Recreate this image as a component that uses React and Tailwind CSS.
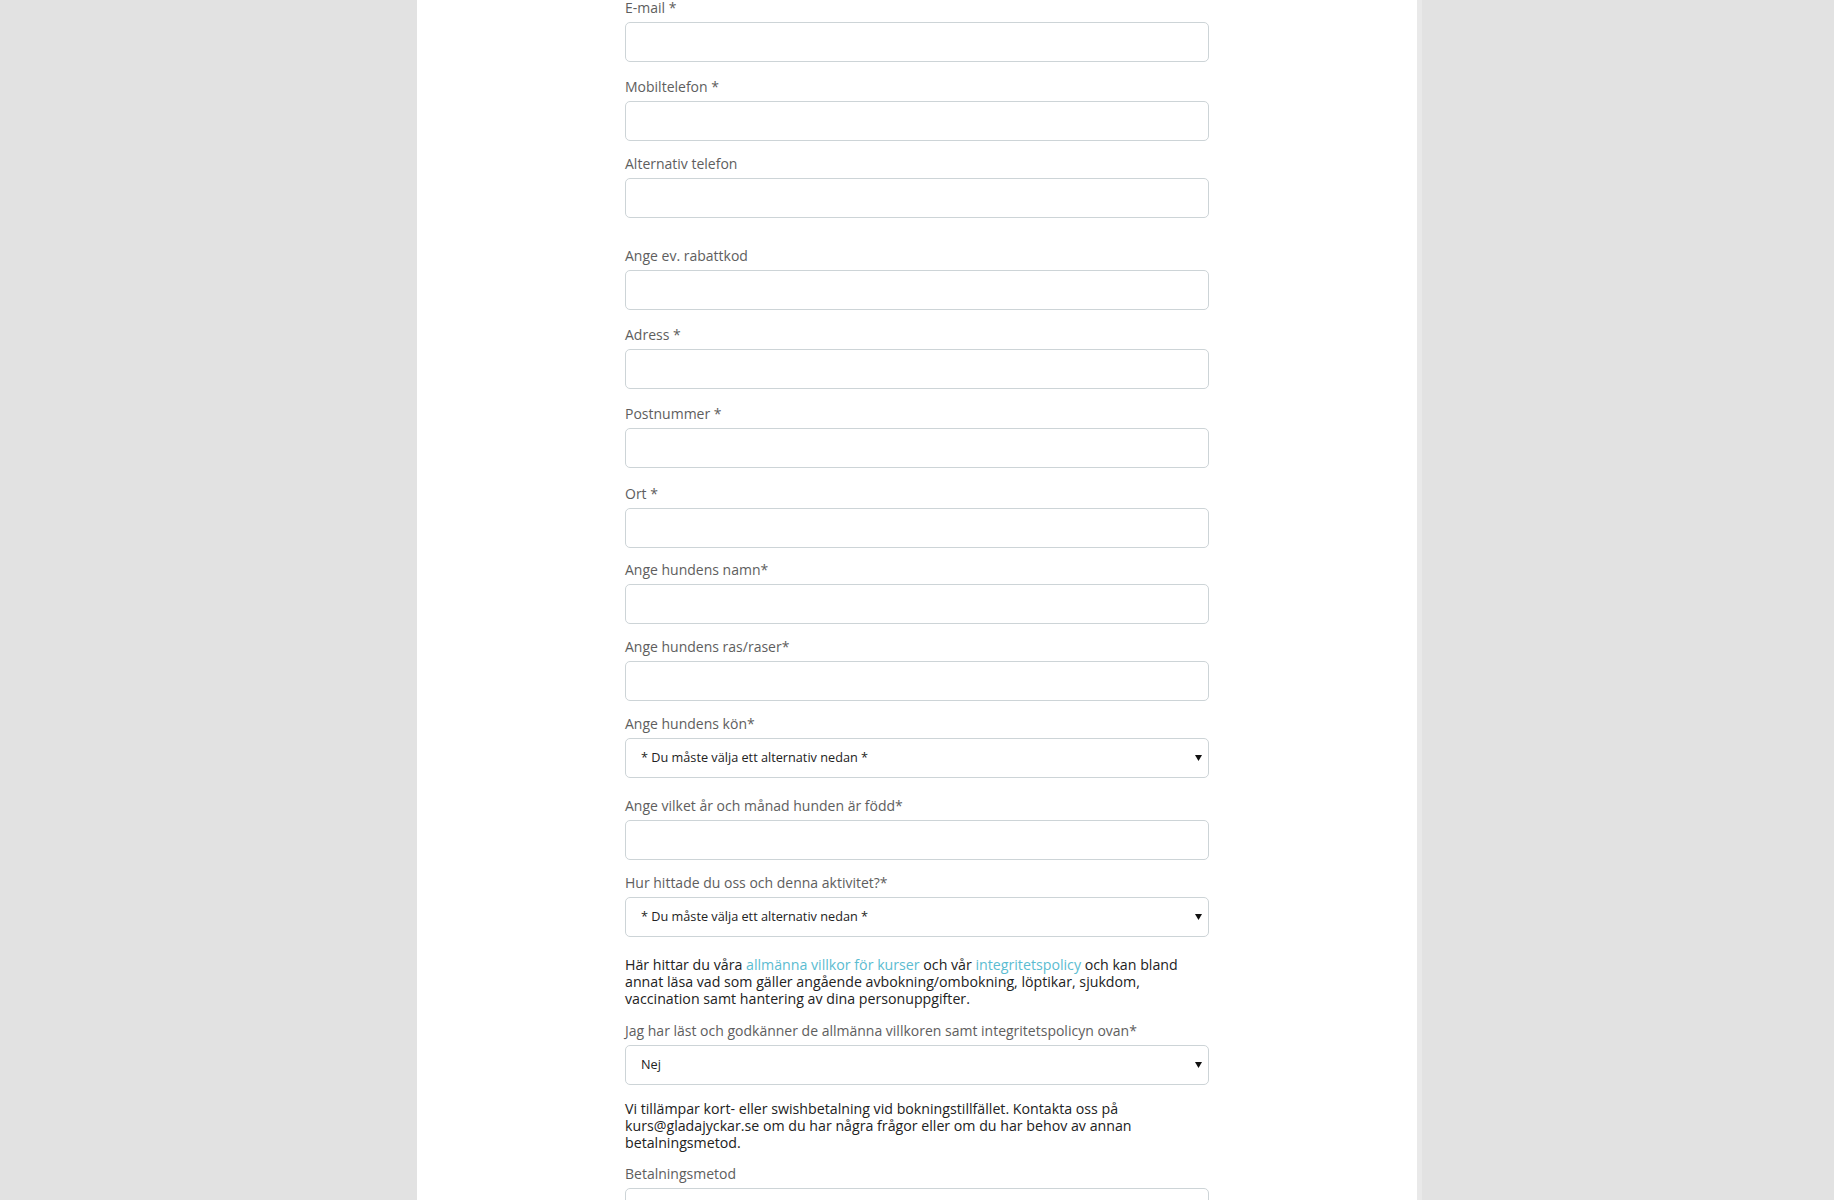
import React from "react";

const font = { fontFamily: "'Open Sans', Lato, sans-serif" };

function Label({ children, className = "" }) {
  return (
    <div className={"text-[14px] leading-[20px] text-[#5e5e5e] pt-[1px] mb-[4px] " + className}>
      {children}
    </div>
  );
}

function TextInput() {
  return <div className="h-[40px] w-full border border-[#cdd4d7] rounded-[5px] bg-white" />;
}

function Select({ value }) {
  return (
    <div className="h-[40px] w-full border border-[#cdd4d7] rounded-[5px] bg-white flex items-center justify-between pl-[15px] pr-[6px]">
      <span className="text-[12.7px] text-[#222]">{value}</span>
      <svg width="7" height="6" viewBox="0 0 7 6" className="block">
        <polygon points="0,0 7,0 3.5,6" fill="#111" />
      </svg>
    </div>
  );
}

function Field({ label, mt, select }) {
  return (
    <div className={mt}>
      <Label>{label}</Label>
      {select ? <Select value={select} /> : <TextInput />}
    </div>
  );
}

export default function App() {
  const placeholder = "* Du måste välja ett alternativ nedan *";
  return (
    <div className="min-h-screen bg-[#e2e2e2] overflow-hidden" style={font}>
      <div className="mx-auto w-[1000px] min-h-[1200px] bg-white shadow-[5px_0_0_#e9e9e9]">
        <div className="mx-auto w-[584px] pb-10">
          <Field label="E-mail *" mt="mt-[-3px]" />
          <Field label="Mobiltelefon *" mt="mt-[14px]" />
          <Field label="Alternativ telefon" mt="mt-[12px]" />
          <Field label="Ange ev. rabattkod" mt="mt-[27px]" />
          <Field label="Adress *" mt="mt-[14px]" />
          <Field label="Postnummer *" mt="mt-[14px]" />
          <Field label="Ort *" mt="mt-[15px]" />
          <Field label="Ange hundens namn*" mt="mt-[11px]" />
          <Field label="Ange hundens ras/raser*" mt="mt-[12px]" />
          <Field label="Ange hundens kön*" mt="mt-[12px]" select={placeholder} />
          <Field label="Ange vilket år och månad hunden är född*" mt="mt-[17px]" />
          <Field label="Hur hittade du oss och denna aktivitet?*" mt="mt-[12px]" select={placeholder} />

          <p className="mt-[19px] text-[14.2px] leading-[17px] text-[#222]">
            Här hittar du våra{" "}
            <a className="text-[#5bbcd1]">allmänna villkor för kurser</a> och vår{" "}
            <a className="text-[#5bbcd1]">integritetspolicy</a> och kan bland
            <br />
            annat läsa vad som gäller angående avbokning/ombokning, löptikar, sjukdom,
            <br />
            vaccination samt hantering av dina personuppgifter.
          </p>

          <Field
            label="Jag har läst och godkänner de allmänna villkoren samt integritetspolicyn ovan*"
            mt="mt-[13px]"
            select="Nej"
          />

          <p className="mt-[15px] text-[14.2px] leading-[17px] text-[#222]">
            Vi tillämpar kort- eller swishbetalning vid bokningstillfället. Kontakta oss på
            <br />
            kurs@gladajyckar.se om du har några frågor eller om du har behov av annan
            <br />
            betalningsmetod.
          </p>

          <Field label="Betalningsmetod" mt="mt-[12px]" />
        </div>
      </div>
    </div>
  );
}
